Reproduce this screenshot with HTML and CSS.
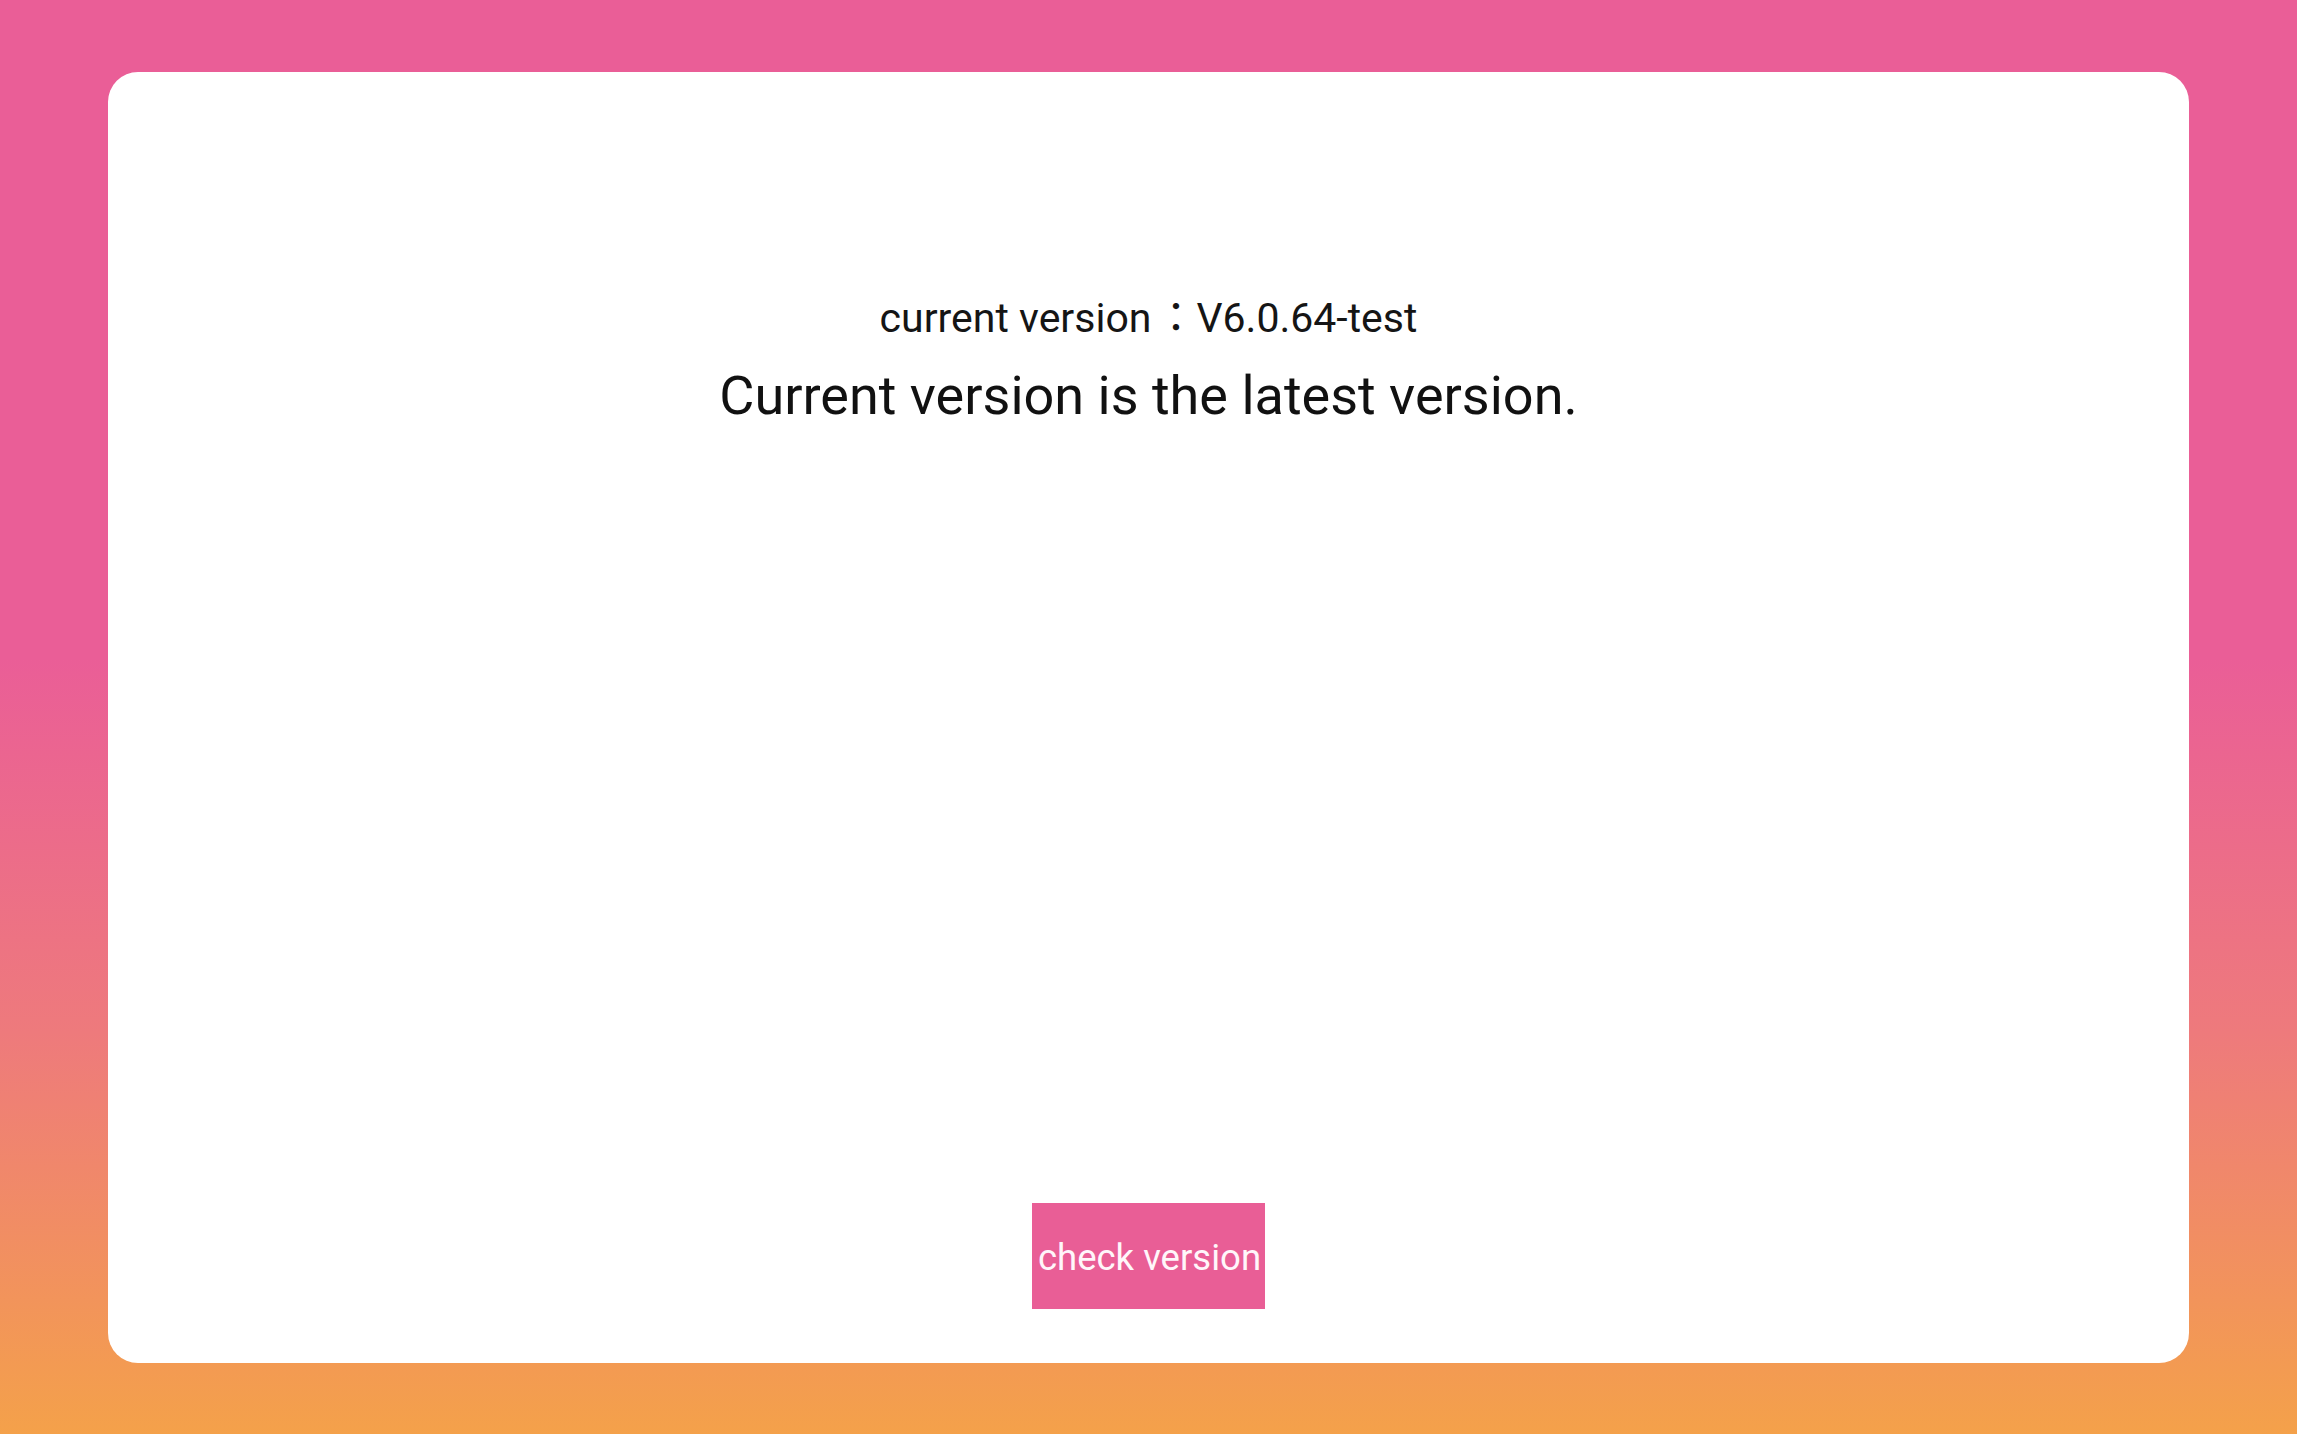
FILE: index.html
```html
<!DOCTYPE html>
<html lang="en">
<head>
<meta charset="utf-8">
<title>Version</title>
<link rel="stylesheet" href="styles.css">
</head>
<body>
  <main class="card">
    <p class="current">current version<span class="sep">：</span>V6.0.64-test</p>
    <p class="status">Current version is the latest version.</p>
    <button class="check" type="button">check version</button>
  </main>
</body>
</html>
```

FILE: styles.css
```css
html, body {
  margin: 0;
  padding: 0;
  height: 100%;
}

body {
  background: linear-gradient(to bottom, #ea5e97 0%, #ea5e97 46%, #ee7a7c 72%, #f4a14a 100%);
  font-family: Roboto, "Noto Sans CJK TC", sans-serif;
  box-sizing: border-box;
  padding: 72px 108px 71px 108px;
}

.card {
  background: #ffffff;
  border-radius: 30px;
  height: 100%;
  box-sizing: border-box;
  display: flex;
  flex-direction: column;
  align-items: center;
  padding: 222px 0 54px 0;
}

.current {
  margin: 0;
  font-size: 41px;
  line-height: 48px;
  color: #151515;
}

.sep {
  padding-left: 4px;
}

.status {
  margin: 22px 0 0 0;
  font-size: 54px;
  line-height: 64px;
  color: #111111;
}

.check {
  margin-top: auto;
  width: 233px;
  height: 106px;
  border: none;
  border-radius: 0;
  padding: 4px 0 0 2px;
  background: #e95e96;
  color: #fff6fa;
  font-family: Roboto, sans-serif;
  font-size: 36.5px;
  line-height: 100px;
  white-space: nowrap;
}
```
